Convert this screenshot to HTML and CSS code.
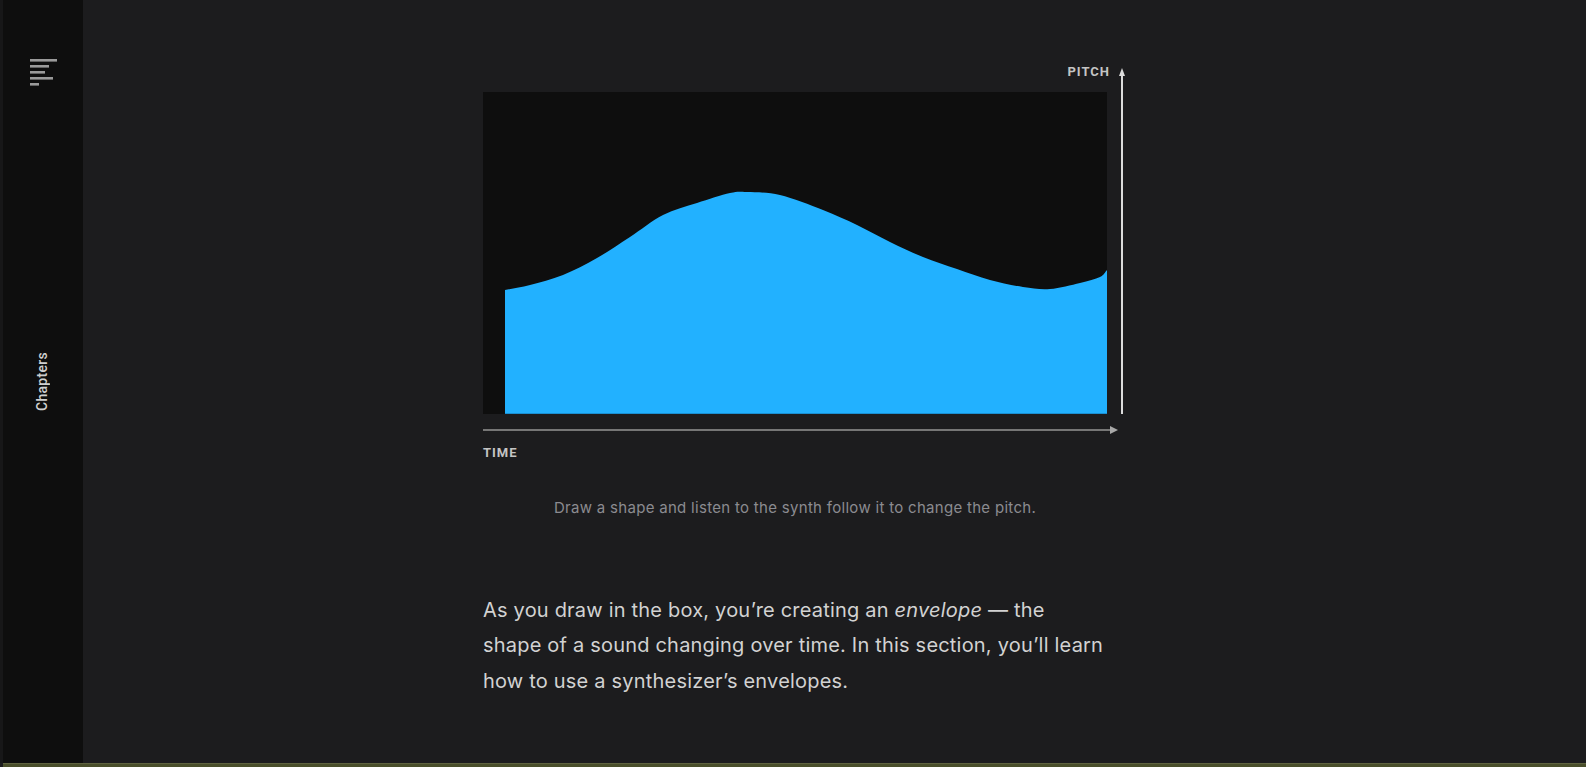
FILE: index.html
```html
<!DOCTYPE html>
<html lang="en">
<head>
<meta charset="utf-8">
<title>Envelopes</title>
<link rel="stylesheet" href="styles.css">
</head>
<body>
<div class="app">
  <div class="top">
    <div class="edge"></div>
    <aside class="sidebar">
      <div class="menu-slot">
        <svg class="menu-icon" width="27" height="28" viewBox="0 0 27 28">
          <rect x="0" y="0" width="27" height="2.6" fill="#9a9a9a"/>
          <rect x="0" y="6" width="19" height="2.6" fill="#9a9a9a"/>
          <rect x="0" y="12" width="15" height="2.6" fill="#9a9a9a"/>
          <rect x="0" y="18" width="23" height="2.6" fill="#9a9a9a"/>
          <rect x="0" y="24" width="9" height="2.6" fill="#9a9a9a"/>
        </svg>
      </div>
      <div class="chapters">Chapters</div>
      <div></div>
    </aside>
    <main class="main">
      <div class="figure">
        <div class="pitch-label">PITCH</div>
        <div class="yaxis"><div class="head"></div><div class="line"></div></div>
        <div class="plot">
          <svg width="624" height="322" viewBox="0 0 624 322">
            <rect width="624" height="322" fill="#0e0e0e"/>
            <path fill="#22b1ff" d="M22,322 L22,198 C30.33,196.33 37.33,195.5 47,193 S68.83,187.5 80,183 S102.83,172.33 114,166 S136,152.17 147,145 S168.83,128.67 180,123 S202.83,114.67 214,111 S238.67,102.83 247,101 S255.67,99.67 264,100 S284.33,100 297,103 S327.17,113 340,118 S362.83,127.67 374,133 S396,144.67 407,150 S428.83,160.5 440,165 S462.83,173.17 474,177 S496,185 507,188 S530,193.5 540,195 S557.5,197.67 567,197 S588.67,193 597,191 S612.5,187.17 617,185 S621.67,180.33 624,178 L624,322 Z"/>
            <rect x="22" y="321" width="602" height="1" fill="#1a8fd2"/>
          </svg>
        </div>
        <div class="xaxis">
          <svg width="644" height="10" viewBox="0 0 644 10">
            <rect x="0" y="4" width="630" height="2" fill="#767676"/>
            <polygon points="627,1 635,5 627,9" fill="#a8a8a8"/>
          </svg>
        </div>
        <div class="time-label">TIME</div>
      </div>
      <p class="caption">Draw a shape and listen to the synth follow it to change the pitch.</p>
      <p class="body-text">As you draw in the box, you’re creating an <em>envelope</em> — the<br>shape of a sound changing over time. In this section, you’ll learn<br>how to use a synthesizer’s envelopes.</p>
    </main>
  </div>
  <div class="bottom-bar"></div>
</div>
</body>
</html>
```

FILE: styles.css
```css
* { box-sizing: border-box; }

html, body {
  margin: 0;
  padding: 0;
  height: 100%;
  background: #1c1c1e;
  font-family: Roboto, "Liberation Sans", sans-serif;
  overflow: hidden;
}

.app {
  height: 100vh;
  display: grid;
  grid-template-rows: 1fr 4px;
}

.top {
  display: flex;
  min-height: 0;
}

.edge {
  width: 3px;
  background: #171718;
  flex: none;
}

.sidebar {
  width: 80px;
  flex: none;
  background: #0e0e0e;
  display: grid;
  grid-template-rows: 1fr auto 1fr;
  justify-items: center;
}

.menu-slot {
  justify-self: start;
  padding: 59px 0 0 27px;
}

.menu-icon { display: block; }

.chapters {
  writing-mode: vertical-rl;
  transform: rotate(180deg);
  font-size: 14px;
  font-weight: 500;
  color: #cfcfcf;
  letter-spacing: 0.3px;
  margin-left: -3px;
}

.main {
  flex: 1;
  padding: 64px 0 0 400px;
  background: #1c1c1e;
}

.figure {
  display: grid;
  grid-template-columns: 624px 20px;
  width: 644px;
}

.pitch-label {
  grid-column: 1;
  grid-row: 1;
  text-align: right;
  font-size: 13px;
  font-weight: 700;
  letter-spacing: 1px;
  line-height: 16px;
  color: #c4c4c4;
  margin-right: -3px;
  margin-bottom: 12px;
}

.yaxis {
  grid-column: 2;
  grid-row: 1 / 3;
  display: flex;
  flex-direction: column;
  align-items: center;
  width: 7px;
  margin-left: 11.5px;
  padding-top: 4px;
}

.yaxis .head {
  width: 0;
  height: 0;
  border-left: 3.5px solid transparent;
  border-right: 3.5px solid transparent;
  border-bottom: 8px solid #dcdcdc;
}

.yaxis .line {
  flex: 1;
  width: 1.5px;
  background: #dcdcdc;
}

.plot {
  grid-column: 1;
  grid-row: 2;
  height: 322px;
}

.plot svg, .xaxis svg { display: block; }

.xaxis {
  grid-column: 1 / 3;
  grid-row: 3;
  margin-top: 11px;
}

.time-label {
  grid-column: 1;
  grid-row: 4;
  margin-top: 10px;
  font-size: 13px;
  font-weight: 700;
  letter-spacing: 1px;
  line-height: 16px;
  color: #c4c4c4;
}

.caption {
  width: 624px;
  margin: 37px 0 0;
  text-align: center;
  font-family: Inter, Roboto, sans-serif;
  font-size: 15px;
  letter-spacing: 0.3px;
  line-height: 20px;
  color: #8b8b90;
}

.body-text {
  margin: 75px 0 0;
  width: 680px;
  font-family: Inter, Roboto, sans-serif;
  font-size: 20px;
  letter-spacing: 0.2px;
  line-height: 35.4px;
  color: #d2d2d2;
}

.body-text em { font-style: italic; }

.bottom-bar {
  background: #4a4f2b;
  border-top: 1px solid #5f6340;
  margin-left: 3px;
}
```
